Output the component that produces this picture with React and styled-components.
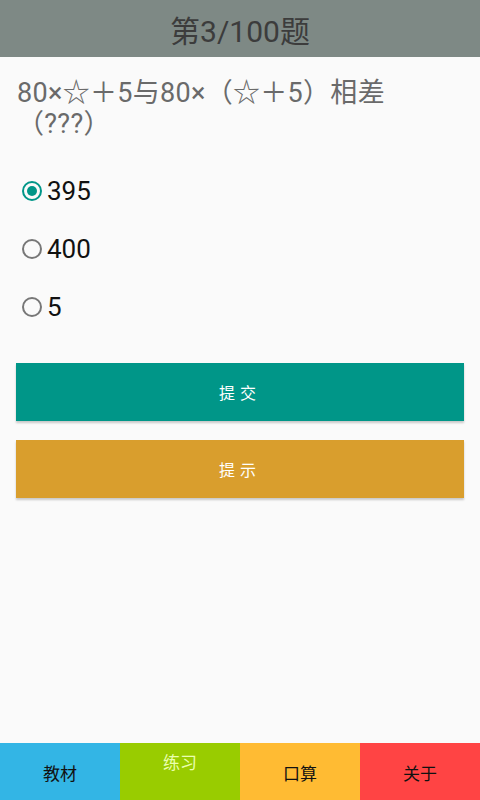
import React, { useState } from 'react';
import styled, { createGlobalStyle, css } from 'styled-components';

const GlobalStyle = createGlobalStyle`
  html, body {
    margin: 0;
    padding: 0;
    height: 100%;
    background: #fafafa;
    font-family: Roboto, "Noto Sans CJK SC", sans-serif;
  }
  #root {
    height: 100%;
  }
`;

const Screen = styled.div`
  height: 800px;
  display: flex;
  flex-direction: column;
  background: #fafafa;
`;

const TitleBar = styled.div`
  height: 57px;
  flex-shrink: 0;
  background: #7e8985;
  display: flex;
  align-items: center;
  justify-content: center;
  color: #3c3c3c;
  font-size: 30px;
`;

const Body = styled.div`
  flex: 1;
  padding: 21px 16px 0;
`;

const Question = styled.div`
  color: #6a6a6a;
  font-size: 27px;
  line-height: 31px;
  letter-spacing: 0.3px;
  margin-left: 1px;
`;

const Options = styled.div`
  display: flex;
  flex-direction: column;
  margin-top: 22px;
`;

const Option = styled.label`
  height: 58px;
  display: flex;
  align-items: center;
  font-size: 26px;
  color: #111;
  cursor: pointer;
`;

const Radio = styled.span`
  width: 20px;
  height: 20px;
  box-sizing: border-box;
  margin: 0 5px 0 6px;
  border-radius: 50%;
  border: 2px solid #777;
  display: flex;
  align-items: center;
  justify-content: center;

  ${(props) => props.checked && css`
    border-color: #009688;
    &::after {
      content: '';
      width: 10px;
      height: 10px;
      border-radius: 50%;
      background: #009688;
    }
  `}
`;

const Buttons = styled.div`
  display: flex;
  flex-direction: column;
  gap: 19px;
  margin-top: 27px;
`;

const ActionButton = styled.button`
  height: 58px;
  border: none;
  border-radius: 0;
  background: ${(props) => props.color};
  color: ${(props) => props.textColor};
  font-family: inherit;
  font-size: 16px;
  letter-spacing: 5px;
  box-shadow: 0 2px 2px rgba(0, 0, 0, 0.2);
  cursor: pointer;
`;

const TabBar = styled.div`
  height: 57px;
  flex-shrink: 0;
  display: grid;
  grid-template-columns: repeat(4, 1fr);
`;

const Tab = styled.div`
  background: ${(props) => props.color};
  display: flex;
  align-items: center;
  justify-content: center;
  font-size: 17px;
  color: #111;
  padding-top: 1px;

  ${(props) => props.active && css`
    align-items: flex-start;
    padding-top: 6px;
    color: #eaffb0;
  `}
`;

const options = ['395', '400', '5'];

const tabs = [
  { label: '教材', color: '#33b5e5' },
  { label: '练习', color: '#99cc00', active: true },
  { label: '口算', color: '#ffbb33' },
  { label: '关于', color: '#ff4444' },
];

const App = () => {
  const [picked, setPicked] = useState(0);

  return (
    <Screen>
      <GlobalStyle />
      <TitleBar>第3/100题</TitleBar>
      <Body>
        <Question>80×☆＋5与80×（☆＋5）相差（???）</Question>
        <Options>
          {options.map((o, i) => (
            <Option key={o} onClick={() => setPicked(i)}>
              <Radio checked={picked === i} />
              {o}
            </Option>
          ))}
        </Options>
        <Buttons>
          <ActionButton color="#009688" textColor="#fff">提交</ActionButton>
          <ActionButton color="#d99e2d" textColor="#fff">提示</ActionButton>
        </Buttons>
      </Body>
      <TabBar>
        {tabs.map((t) => (
          <Tab key={t.label} color={t.color} active={t.active}>{t.label}</Tab>
        ))}
      </TabBar>
    </Screen>
  );
};

export default App;
